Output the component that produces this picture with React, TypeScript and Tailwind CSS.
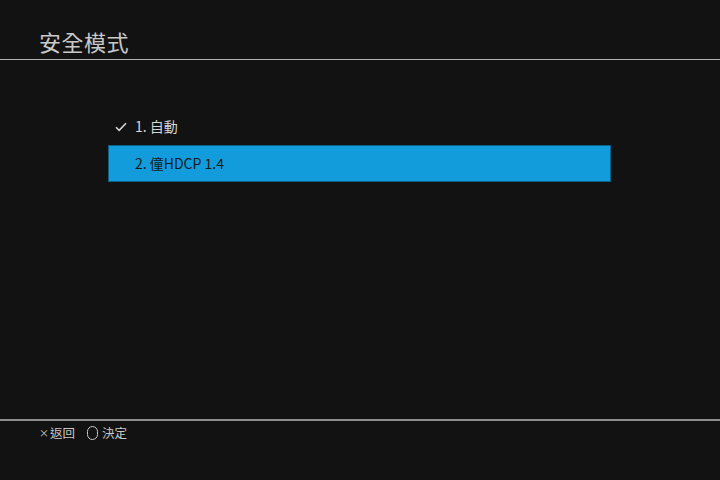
const FONT = "font-['Noto_Sans_CJK_TC','Noto_Sans',sans-serif]";

export default function App() {
  return (
    <div className={`w-[720px] h-[480px] bg-[#121212] flex flex-col ${FONT}`}>
      {/* Title bar */}
      <div className="h-[60px] border-b border-[#b4b4b4] flex items-end pl-[39px] pb-[3px]">
        <h1 className="text-[22px] leading-[30px] text-[#c9c9c9] tracking-[0.5px]">安全模式</h1>
      </div>

      {/* Options */}
      <div className="flex-1 pt-[48px] pl-[108px]">
        <div className="w-[503px] h-[37px] flex items-center text-[14px] text-[#d6d6d6]">
          <span className="w-[27px] flex justify-start pl-[7px]">
            <svg width="12" height="10" viewBox="0 0 12 10" fill="none">
              <path d="M1 5.2 L4.2 8.4 L11 1.2" stroke="#d6d6d6" strokeWidth="1.6" />
            </svg>
          </span>
          <span>1. 自動</span>
        </div>
        <div className="w-[503px] h-[37px] bg-[#129cdb] border border-[#0c5f89] flex items-center pl-[26px] text-[14px] text-[#0f1a22]">
          2. 僮HDCP 1.4
        </div>
      </div>

      {/* Footer */}
      <div className="h-[61px] border-t-2 border-[#8c8c8c] flex items-start pt-[3px] pl-[39px] text-[12.5px] text-[#c8c8c8] gap-[12px]">
        <span className="flex items-center gap-[1px]">
          <span className="text-[10px] leading-none">×</span>
          <span>返回</span>
        </span>
        <span className="flex items-center gap-[4px]">
          <span className="w-[11px] h-[14px] rounded-full border border-[#c8c8c8]" />
          <span>決定</span>
        </span>
      </div>
    </div>
  );
}
